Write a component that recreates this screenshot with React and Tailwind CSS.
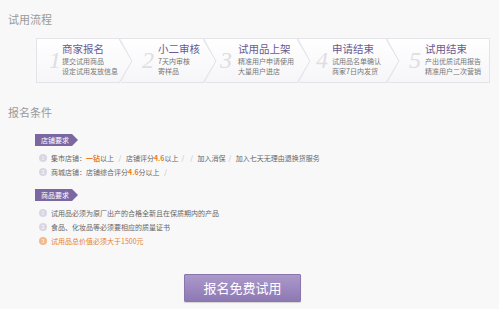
import React from 'react';

const steps = [
  { n: '1', title: '商家报名', lines: ['提交试用商品', '设定试用发放信息'], w: 96, pad: 12, numW: 13 },
  { n: '2', title: '小二审核', lines: ['7天内审核', '寄样品'], w: 84, pad: 9, numW: 16 },
  { n: '3', title: '试用品上架', lines: ['精准用户申请使用', '大量用户进店'], w: 94, pad: 3, numW: 18 },
  { n: '4', title: '申请结束', lines: ['试用品名单确认', '商家7日内发货'], w: 89, pad: 5, numW: 16 },
  { n: '5', title: '试用结束', lines: ['产出优质试用报告', '精准用户二次营销'], w: 91, pad: 9, numW: 16 },
];

const Chevron = () => (
  <svg width="14" height="44" viewBox="0 0 14 44" className="shrink-0">
    <polygon points="0,0 13,22 0,44 2,44 13,22 2,0" fill="#f1f0f4" />
    <polyline points="0,0 13,22 0,44" fill="none" stroke="#e2e0e8" strokeWidth="1" />
  </svg>
);

const Tag = ({ children }) => (
  <div className="flex items-center h-[12px]">
    <div className="h-full bg-[#7b68a3] text-white text-[7px] leading-[12px] pl-[6px] pr-[3px]">{children}</div>
    <svg width="6" height="12" viewBox="0 0 6 12">
      <polygon points="0,0 6,6 0,12" fill="#7b68a3" />
    </svg>
  </div>
);

const Bullet = ({ n, orange }) => (
  <span
    className={`w-[8px] h-[8px] rounded-full flex items-center justify-center text-[5px] text-white shrink-0 ${
      orange ? 'bg-[#f3b98a]' : 'bg-[#d9d6e2]'
    }`}
  >
    {n}
  </span>
);

const Row = ({ n, orange, children }) => (
  <div className="flex items-center gap-[4px] h-[14px] pl-[39px]">
    <Bullet n={n} orange={orange} />
    <span className={`text-[7px] ${orange ? 'text-[#e5822e]' : 'text-[#666]'}`}>{children}</span>
  </div>
);

const O = ({ children }) => <b className="text-[#ee7a1f] font-bold">{children}</b>;

export default function App() {
  return (
    <div
      className="w-[499px] h-[309px] bg-[#f8f8f9] overflow-hidden"
      style={{ fontFamily: '"Noto Sans CJK SC", "Noto Sans", sans-serif' }}
    >
      <div className="pl-[8px] pt-[11px] text-[11px] leading-[16px] text-[#9a9a9a]">试用流程</div>

      <div className="ml-[36px] mt-[11px] w-[454px] h-[45px] flex border border-[#e4e3e8] bg-gradient-to-b from-white to-[#f6f5f8]">
        {steps.map((s, i) => (
          <div key={s.n} className="flex h-full shrink-0" style={{ width: s.w }}>
            <div className="flex flex-1" style={{ paddingLeft: s.pad }}>
              <div
                className="text-[24px] italic font-light text-[#dedde3] leading-none pt-[9px] shrink-0"
                style={{ width: s.numW, fontFamily: '"Liberation Serif", serif' }}
              >
                {s.n}
              </div>
              <div className="pt-[2px]">
                <div className="text-[10.5px] leading-[15px] text-[#6a5a92]">{s.title}</div>
                <div className="text-[7px] leading-[10px] text-[#777] whitespace-nowrap">{s.lines[0]}</div>
                <div className="text-[7px] leading-[10px] text-[#777] whitespace-nowrap">{s.lines[1]}</div>
              </div>
            </div>
            {i < steps.length - 1 && <Chevron />}
          </div>
        ))}
      </div>

      <div className="pl-[8px] mt-[21px] text-[11px] leading-[16px] text-[#9a9a9a]">报名条件</div>

      <div className="pl-[35px] mt-[14px]">
        <Tag>店铺要求</Tag>
      </div>
      <div className="mt-[5px]">
        <Row n="1">
          集市店铺：<O>一钻</O>以上 <span className="text-[#bbb] mx-[3px]">/</span> 店铺评分<O>4.6</O>以上
          <span className="text-[#bbb] mx-[3px]">/</span>
          <span className="text-[#bbb] mx-[3px]">/</span> 加入消保
          <span className="text-[#bbb] mx-[3px]">/</span> 加入七天无理由退换货服务
        </Row>
        <Row n="2">
          商城店铺：店铺综合评分<O>4.6</O>分以上 <span className="text-[#bbb] mx-[3px]">/</span>
        </Row>
      </div>

      <div className="pl-[35px] mt-[10px]">
        <Tag>商品要求</Tag>
      </div>
      <div className="mt-[5px]">
        <Row n="1">试用品必须为原厂出产的合格全新且在保质期内的产品</Row>
        <Row n="2">食品、化妆品等必须要相应的质量证书</Row>
        <Row n="3" orange>试用品总价值必须大于1500元</Row>
      </div>

      <div className="flex justify-center mt-[26px] pr-[14px]">
        <div className="w-[117px] h-[28px] flex items-center justify-center text-white text-[13px] bg-gradient-to-b from-[#ab99cb] to-[#8e79b3] border border-[#8a76ad] rounded-[1px] shadow-[0_1px_1px_rgba(0,0,0,0.15)]">
          报名免费试用
        </div>
      </div>
    </div>
  );
}
